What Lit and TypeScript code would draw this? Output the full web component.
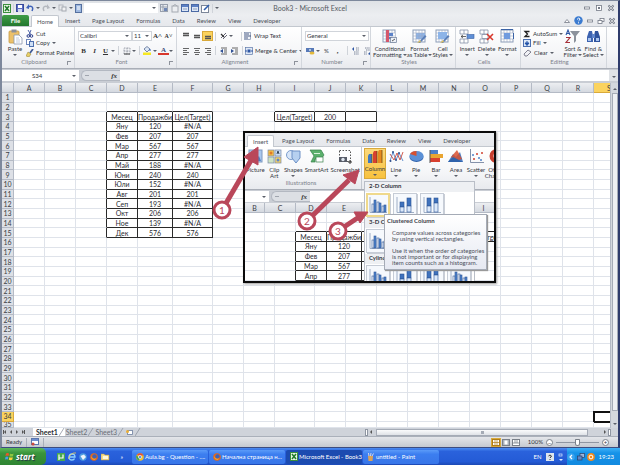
import { LitElement, html, svg, css, nothing, TemplateResult } from "lit";
import { customElement } from "lit/decorators.js";
import { classMap } from "lit/directives/class-map.js";

type Cells = Record<string, string>;

const MONTHS: [string, string, string][] = [
  ["Яну", "120", "#N/A"],
  ["Фев", "207", "207"],
  ["Мар", "567", "567"],
  ["Апр", "277", "277"],
  ["Май", "188", "#N/A"],
  ["Юни", "240", "240"],
  ["Юли", "152", "#N/A"],
  ["Авг", "201", "201"],
  ["Сеп", "193", "#N/A"],
  ["Окт", "206", "206"],
  ["Ное", "139", "#N/A"],
  ["Дек", "576", "576"],
];

const CELLS: Cells = { D3: "Месец", E3: "Продажби", F3: "Цел(Target)", I3: "Цел(Target)", J3: "200", K3: "" };
MONTHS.forEach(([month, sales, target], i) => {
  CELLS[`D${i + 4}`] = month;
  CELLS[`E${i + 4}`] = sales;
  CELLS[`F${i + 4}`] = target;
});

const next = (col: string) => String.fromCharCode(col.charCodeAt(0) + 1);
const boxed = (col: string, row: number) => `${col}${row}` in CELLS;

const svgIcon = (w: number, h: number, body: unknown) =>
  html`<svg class="ico" width=${w} height=${h} viewBox="0 0 ${w} ${h}" aria-hidden="true">${body}</svg>`;

const gridLines = (fill: string) => svg`
  <rect x="1" y="1" width="12" height="12" fill="#fff" stroke="#8c9db8" stroke-width="1"/>
  <rect x="4" y="4" width="9" height="6" fill=${fill}/>
  <path d="M1 4H13M1 7H13M1 10H13M4 1V13M7 1V13M10 1V13" stroke="#9aaac4" stroke-width=".6"/>`;

const ICONS: Record<string, TemplateResult> = {
  excel: svgIcon(8, 9, svg`<rect x=".5" y=".5" width="7" height="8" fill="#e9f5e4" stroke="#3b8f3d"/><path d="M2 2L6 7M6 2L2 7" stroke="#1f7a2a" stroke-width="1.5"/>`),
  save: svgIcon(8, 8, svg`<rect x=".5" y=".5" width="7" height="7" fill="#5b6fc4" stroke="#3a4a9b"/><rect x="2" y="1" width="4" height="3" fill="#fff"/><rect x="2" y="5" width="4" height="3" fill="#cfd6ee"/>`),
  undo: svgIcon(8, 8, svg`<path d="M2 3C5 1 8 3 6 7" fill="none" stroke="#3f62b8" stroke-width="1.5"/><path d="M0 4L3 0V5Z" fill="#3f62b8"/>`),
  redo: svgIcon(8, 8, svg`<path d="M6 3C3 1 0 3 2 7" fill="none" stroke="#b4b8bf" stroke-width="1.5"/><path d="M8 4L5 0V5Z" fill="#b4b8bf"/>`),
  pages: svgIcon(9, 8, svg`<rect x="1" y="1" width="4" height="5" fill="#e8e9eb" stroke="#b4b8bf"/><rect x="4" y="3" width="4" height="4" fill="#f2f2f3" stroke="#a4a9b1"/>`),
  doc: svgIcon(7, 9, svg`<rect x=".5" y=".5" width="6" height="8" fill="#9db8e0" stroke="#55709f"/><path d="M2 3H5M2 5H5" stroke="#fff"/>`),
  sheetGray: svgIcon(9, 8, svg`<rect x=".5" y=".5" width="7" height="7" fill="#e8ebf0" stroke="#98a0ad"/><path d="M1 3H7M3 1V7" stroke="#98a0ad"/><rect x="4" y="4" width="3" height="3" fill="#6f87b5"/>`),
  lock: svgIcon(8, 9, svg`<rect x="1" y="2" width="6" height="6" fill="#eceef1" stroke="#a4a9b1"/><path d="M2 2Q4 -1 6 2" fill="none" stroke="#a4a9b1"/>`),
  form: svgIcon(8, 8, svg`<rect x=".5" y=".5" width="7" height="7" fill="#dce6f5" stroke="#4b6aa5"/><rect x="1" y="1" width="6" height="2" fill="#5c80c4"/><path d="M2 5H6" stroke="#8b9dbd"/>`),
  pen: svgIcon(9, 9, svg`<rect x=".5" y="1.5" width="7" height="7" fill="#fff" stroke="#7b8698"/><path d="M3 6L8 1" stroke="#2f5fae" stroke-width="1.6"/>`),
  paste: svgIcon(15, 16, svg`<rect x="1" y="2" width="10" height="12" rx="1" fill="#ecc069" stroke="#c79a45" stroke-width=".8"/><rect x="3.500" y=".5" width="5" height="3" fill="#8d9099"/><path d="M6 6H11L14 9V15H6Z" fill="#fff" stroke="#8b97ad" stroke-width=".8"/><path d="M8 9H11M8 11H12M8 13H12" stroke="#a9b8d2" stroke-width=".7"/>`),
  cut: svgIcon(8, 8, svg`<path d="M2 0L5 5M5 0L3 5" stroke="#5166a8" stroke-width="1"/><circle cx="2.300" cy="6" r="1.300" fill="none" stroke="#2e3f8c"/><circle cx="5.500" cy="6" r="1.300" fill="none" stroke="#2e3f8c"/>`),
  copy: svgIcon(8, 8, svg`<rect x=".5" y=".5" width="4" height="5" fill="#fff" stroke="#6c86bb"/><rect x="3.500" y="2.500" width="4" height="5" fill="#cfe0f6" stroke="#4c6fae"/>`),
  brush: svgIcon(8, 8, svg`<path d="M0 7L2 3L5 5L3 8Z" fill="#e8d068" stroke="#8f7a2a" stroke-width=".5"/><path d="M4 4L7 0" stroke="#3f5a94" stroke-width="1.700"/>`),
  border: svgIcon(8, 8, svg`<path d="M1 1H7V7H1ZM4 1V7M1 4H7" fill="none" stroke="#8a919c" stroke-width=".8" stroke-dasharray="1 .5"/><path d="M1 7H7" stroke="#444"/>`),
  bucket: svgIcon(9, 9, svg`<path d="M1 3L4 .5L7 3L4 6Z" fill="#dce7f5" stroke="#5a6f96" stroke-width=".8"/><path d="M7 3V5" stroke="#2e5fb0"/><rect y="6.500" width="8" height="2.500" fill="#f6e823"/>`),
  alignTop: svgIcon(8, 8, svg`<path d="M1 1.500H7M1 3.500H7" stroke="#555" stroke-width="1.300"/>`),
  alignMid: svgIcon(8, 8, svg`<path d="M1 3.500H7M1 5.500H7" stroke="#555" stroke-width="1.300"/>`),
  alignBot: svgIcon(8, 8, svg`<path d="M1 4.500H7M1 6.500H7" stroke="#555" stroke-width="1.300"/>`),
  left: svgIcon(8, 8, svg`<path d="M1 1.500H7M1 3.500H5M1 5.500H7M1 7.500H5" stroke="#555" stroke-width=".9"/>`),
  center: svgIcon(8, 8, svg`<path d="M1 1.500H7M2 3.500H6M1 5.500H7M2 7.500H6" stroke="#555" stroke-width=".9"/>`),
  right: svgIcon(8, 8, svg`<path d="M1 1.500H7M3 3.500H7M1 5.500H7M3 7.500H7" stroke="#555" stroke-width=".9"/>`),
  orient: svgIcon(8, 8, svg`<path d="M1 6L6 1M3 7L7 3" stroke="#667" stroke-width="1"/><path d="M1 2L4 5" stroke="#333" stroke-width="1.200"/>`),
  indentL: svgIcon(8, 8, svg`<path d="M1 1H7M4 3H7M4 5H7M1 7H7" stroke="#555" stroke-width=".9"/><path d="M0 4L3 2V6Z" fill="#2e4f94"/>`),
  indentR: svgIcon(8, 8, svg`<path d="M1 1H7M4 3H7M4 5H7M1 7H7" stroke="#555" stroke-width=".9"/><path d="M3 4L0 2V6Z" fill="#2e4f94"/>`),
  wrap: svgIcon(8, 8, svg`<rect x=".5" y=".5" width="6" height="7" fill="#eef2f8" stroke="#7c8cab" stroke-width=".7"/><path d="M1 2H5M1 4H7M1 6H4" stroke="#3b4d78" stroke-width=".9"/>`),
  merge: svgIcon(8, 8, svg`<rect x=".5" y=".5" width="7" height="7" fill="#dfe8f6" stroke="#5d78a8" stroke-width=".7"/><rect x="2.500" y="2.500" width="3" height="3" fill="#2f57a4"/><path d="M0 4H2M6 4H8" stroke="#2f57a4"/>`),
  money: svgIcon(9, 8, svg`<rect y="1" width="8" height="4" fill="#5779b8"/><circle cx="4" cy="3" r="1" fill="#cfe0ee"/><ellipse cx="6" cy="6" rx="2.500" ry="1.500" fill="#e3b93c"/>`),
  decUp: svgIcon(8, 8, svg`<path d="M4 1H7M4 3H7M2 5H7M2 7H7" stroke="#7a8499" stroke-width="1" stroke-dasharray="1.500 .7"/><path d="M0 2L2 0V4Z" fill="#2f57a4"/>`),
  decDown: svgIcon(8, 8, svg`<path d="M2 1H7M3 3H7M1 5H4M1 7H4" stroke="#7a8499" stroke-width="1" stroke-dasharray="1.500 .7"/><path d="M5 7L7 5V8Z" fill="#2f57a4"/>`),
  cond: svgIcon(15, 15, svg`${gridLines("#fff")}<rect x="4" y="1" width="3" height="12" fill="#d4576b"/><rect x="7" y="4" width="4" height="3" fill="#5c83c8"/><rect x="7" y="8" width="3" height="2" fill="#5c83c8"/><rect x="8.500" y="8.500" width="6" height="5" fill="#eef2f8" stroke="#6d7c98" stroke-width=".7"/><path d="M10 12L13 10" stroke="#333" stroke-width=".8"/>`),
  fmtTable: svgIcon(15, 15, svg`${gridLines("#8db4e8")}<path d="M6 14L13 6L14.500 7.500L8 14Z" fill="#5b7fb8"/><path d="M5 14L8 11L9 13Z" fill="#e2c25b"/>`),
  cellStyle: svgIcon(15, 15, svg`${gridLines("#fff")}<rect x="3" y="3" width="9" height="7" fill="#8db4e8"/><path d="M6 14L13 6L14.500 7.500L8 14Z" fill="#5b7fb8"/><path d="M5 14L8 11L9 13Z" fill="#e2c25b"/>`),
  insertCells: svgIcon(16, 15, svg`<path d="M1 1H9V5H1ZM5 1V5M1 10H9V14H1ZM5 10V14" fill="#fff" stroke="#8592aa" stroke-width=".8"/><rect x="8" y="5.500" width="7" height="4" fill="#5f8fd6" stroke="#3a62a5" stroke-width=".6"/><path d="M2 7.500H7M2 7.500L4 6M2 7.500L4 9" stroke="#444" stroke-width=".8" fill="none"/>`),
  deleteCells: svgIcon(16, 15, svg`<path d="M1 1H9V5H1ZM5 1V5M1 10H9V14H1ZM5 10V14M3 5.500H9V9.500H3Z" fill="#fff" stroke="#8592aa" stroke-width=".8"/><path d="M8 5L14 11M14 5L8 11" stroke="#d8372c" stroke-width="1.600"/>`),
  formatCells: svgIcon(15, 15, svg`${gridLines("#fff")}<rect x="4" y="4" width="6" height="6" fill="#6f9ade"/><path d="M1 .5H13M13.500 4V10" stroke="#3a62a5" stroke-width="1"/>`),
  sigma: svgIcon(8, 8, svg`<path d="M6.500 1.500H2L4.500 4L2 6.500H6.500" fill="none" stroke="#222" stroke-width="1.300"/>`),
  fill: svgIcon(8, 8, svg`<rect x=".5" y=".5" width="7" height="7" fill="#dce8f8" stroke="#4b6fb0"/><path d="M4 2V4M2 4H6L4 6.500Z" stroke="#2253a8" fill="#2253a8"/>`),
  eraser: svgIcon(9, 8, svg`<path d="M1 5L5 1L8 3L4 7H2Z" fill="#f0f1f5" stroke="#667" stroke-width=".8"/>`),
  sort: svgIcon(15, 15, svg`<path d="M1 6L3 1L5 6M1.500 4.500H4.500" fill="none" stroke="#2f57a4" stroke-width="1.100"/><path d="M1 8.500H5L1 13.500H5" fill="none" stroke="#a6323a" stroke-width="1.200"/><path d="M5 2H15L11 7V12L9 14V7Z" fill="#8c929c"/>`),
  binocular: svgIcon(15, 15, svg`<path d="M3 2H6L7 7V13H1V8Z" fill="#3d63b0"/><path d="M9 2H12L14 8V13H8V7Z" fill="#2f539d"/><rect x="6" y="5" width="3" height="4" fill="#5f86cc"/><rect x="2" y="9" width="3" height="3" fill="#a9c4ee"/><rect x="10" y="9" width="3" height="3" fill="#a9c4ee"/>`),
  picture: svgIcon(15, 15, svg`<rect x="1" y="1" width="13" height="12" fill="#a9c8ee" stroke="#7d98c0"/><path d="M2 12L6 6L9 9L11 7L13 12Z" fill="#4f7fc4"/>`),
  clip: svgIcon(15, 15, svg`<g stroke="#7a8aa6" stroke-width=".7"><rect x="1" y="1" width="6" height="6" fill="#f4c04a"/><rect x="8" y="1" width="6" height="6" fill="#c9dcf5"/><rect x="1" y="8" width="6" height="6" fill="#cfe3c2"/><rect x="8" y="8" width="6" height="6" fill="#f2d06a"/></g><circle cx="4" cy="4" r="1.500" fill="#e07a2a"/><circle cx="11" cy="11" r="1.500" fill="#5b86c9"/><path d="M10 5L11 2L12 5" stroke="#345" fill="none"/>`),
  shapes: svgIcon(15, 15, svg`<circle cx="5" cy="6" r="4.500" fill="#d8e6f8" stroke="#7b9ccc"/><path d="M6 2H14V9L10 14L6 9Z" fill="#b6d0f0" stroke="#6c90c6"/>`),
  smart: svgIcon(16, 15, svg`<path d="M1 1H12L15 6L12 10H6V13H2L5 7Z" fill="#5bb06c" stroke="#37804a" stroke-width=".7"/><rect x="5" y="4" width="6" height="1" fill="#d9f0dc"/><rect x="7" y="8" width="7" height="5" fill="#fff" stroke="#37804a" stroke-width=".7"/>`),
  shot: svgIcon(15, 15, svg`<rect x="1.500" y="1.500" width="11" height="11" fill="none" stroke="#555" stroke-dasharray="1.500 1.500"/><rect x="1" y="8" width="8" height="5" fill="#555a66"/><circle cx="5" cy="10.500" r="1.700" fill="#dfe6ef"/><path d="M12 11V15M10 13H14" stroke="#333"/>`),
  chColumn: svgIcon(16, 15, svg`<path d="M1 7L2 5H5V14H1Z" fill="#3f78c0"/><path d="M6 4L7 2H10V14H6Z" fill="#d8402f"/><path d="M11 3L12 1H15V14H11Z" fill="#e58a1e"/><path d="M5 5V14M10 2V14M15 1V14" stroke="#5b3a10" stroke-width=".7"/>`),
  chLine: svgIcon(15, 15, svg`<path d="M1 12L4 3L7 11L10 4L14 12" fill="none" stroke="#4f82c8" stroke-width=".9"/><path d="M1 5L5 11L8 4L11 11L14 3" fill="none" stroke="#cc4a3c" stroke-width=".9"/><g fill="#2d4f8c"><circle cx="4" cy="3" r="1"/><circle cx="7" cy="11" r="1"/><circle cx="10" cy="4" r="1"/><circle cx="1.500" cy="12" r="1"/></g>`),
  chPie: svgIcon(15, 15, svg`<ellipse cx="7.500" cy="8" rx="7" ry="5" fill="#2f62ab"/><ellipse cx="7.500" cy="7" rx="7" ry="5" fill="#5b90d6"/><path d="M7.500 7V2A7 5 0 0 0 1 5Z" fill="#d8502f"/>`),
  chBar: svgIcon(15, 15, svg`<rect x="1" y="1" width="8" height="4" fill="#4d7fc6"/><rect x="1" y="5" width="13" height="4" fill="#e9a531"/><rect x="1" y="9" width="10" height="4" fill="#d8402f"/><path d="M1 1V14" stroke="#555"/>`),
  chArea: svgIcon(16, 15, svg`<path d="M0 13L5 5L8 8L12 3L15 13Z" fill="#4d7fc6"/><path d="M3 8L9 1L14 10L8 12Z" fill="#d8502f" opacity=".85"/><path d="M0 13L5 8L15 13Z" fill="#2f62ab"/>`),
  chScatter: svgIcon(15, 15, svg`<path d="M1.500 0V13.500H15" fill="none" stroke="#8592aa"/><g fill="#d0402f"><circle cx="5" cy="10" r="1"/><circle cx="8" cy="5" r="1"/><circle cx="13" cy="4" r="1"/></g><g fill="#4f82c8"><circle cx="4" cy="6" r="1"/><circle cx="10" cy="9" r="1"/><circle cx="12" cy="11" r="1"/></g>`),
  chOther: svgIcon(15, 15, svg`<circle cx="7.500" cy="7" r="5" fill="none" stroke="#c9402f" stroke-width="4"/>`),
  tile: svgIcon(20, 20, svg`<path d="M2 2V17.500H19" fill="none" stroke="#8b9db8" stroke-width=".8"/><g stroke="#2c5596" stroke-width=".6"><rect x="4" y="9" width="2" height="8" fill="#fff"/><rect x="6" y="5" width="2" height="12" fill="#4f83cc"/><rect x="9" y="7" width="2" height="10" fill="#fff"/><rect x="11" y="8" width="2" height="9" fill="#4f83cc"/><rect x="14" y="11" width="2" height="6" fill="#fff"/><rect x="16" y="10" width="2" height="7" fill="#4f83cc"/></g>`),
  tileStack: svgIcon(20, 20, svg`<path d="M2 2V17.500H19" fill="none" stroke="#8b9db8" stroke-width=".8"/><g stroke="#2c5596" stroke-width=".6"><rect x="5" y="7" width="4" height="5" fill="#3f72bd"/><rect x="5" y="12" width="4" height="5" fill="#dce9f9"/><rect x="12" y="3" width="4" height="8" fill="#3f72bd"/><rect x="12" y="11" width="4" height="6" fill="#dce9f9"/></g>`),
  tileFull: svgIcon(20, 20, svg`<path d="M2 2V17.500H19" fill="none" stroke="#8b9db8" stroke-width=".8"/><g stroke="#2c5596" stroke-width=".6"><rect x="5" y="3" width="4" height="8" fill="#3f72bd"/><rect x="5" y="11" width="4" height="6" fill="#dce9f9"/><rect x="12" y="3" width="4" height="5" fill="#3f72bd"/><rect x="12" y="8" width="4" height="9" fill="#dce9f9"/></g>`),
  min: svgIcon(8, 8, svg`<rect x="1.500" y="3" width="5" height="2" fill="#fff" stroke="#737985" stroke-width=".8"/>`),
  max: svgIcon(8, 8, svg`<rect x="1.500" y="1.500" width="5" height="5" fill="#fff" stroke="#737985" stroke-width=".8"/><rect x="3" y="3" width="2" height="2" fill="#737985"/>`),
  restore: svgIcon(8, 8, svg`<rect x="3" y="1.500" width="4" height="3" fill="#fff" stroke="#737985" stroke-width=".8"/><rect x="1" y="3.500" width="4" height="3" fill="#fff" stroke="#737985" stroke-width=".8"/>`),
  close: svgIcon(8, 8, svg`<path d="M1.500 1.500L6.500 6.500M6.500 1.500L1.500 6.500" stroke="#737985" stroke-width="1.800"/><path d="M2 2L6 6M6 2L2 6" stroke="#fff" stroke-width=".6"/>`),
  up: svgIcon(8, 8, svg`<path d="M1.500 5.500L4 2.500L6.500 5.500Z" fill="#fff" stroke="#737985" stroke-width=".8"/>`),
  help: svgIcon(9, 9, svg`<circle cx="4.500" cy="4.500" r="4.200" fill="#3b7bd0"/><path d="M3 3.500Q4.500 1 6 3Q6 4 4.500 5M4.500 6.300V7.300" fill="none" stroke="#fff" stroke-width="1"/>`),
  flag: svgIcon(9, 9, svg`<path d="M1 1.500Q2.500 .5 4 1.500L3.500 4Q2 3.200 .5 4Z" fill="#f0552a"/><path d="M5 1.500Q6.500 2.500 8.500 1.500L8 4.200Q6 5 4.500 4.200Z" fill="#8cc63f"/><path d="M.5 5Q2 4.200 3.300 5L2.800 7.500Q1.500 6.800 0 7.500Z" fill="#4a9bea"/><path d="M4.300 5.200Q6 6 7.800 5.200L7.300 7.800Q5.500 8.500 3.800 7.800Z" fill="#fbd13b"/>`),
  utorrent: svgIcon(8, 8, svg`<rect width="8" height="8" fill="#49a84f"/><path d="M2 1.500V5H6V1.500M2 5V7" fill="none" stroke="#fff" stroke-width="1.200"/>`),
  ie: svgIcon(8, 9, svg`<path d="M1 5H7Q7 2 4 2Q1 2 1 5Q1 8 4 8Q6 8 6.500 6.500" fill="none" stroke="#8fd2ff" stroke-width="1.300"/><path d="M0 7Q3 0 8 1" fill="none" stroke="#f4cf52" stroke-width=".8"/>`),
  thunder: svgIcon(8, 8, svg`<circle cx="4" cy="4" r="3.700" fill="#4f9ce0"/><path d="M1.500 3L5 1.500L7 4L4 7Z" fill="#eef5fb"/>`),
  fox: svgIcon(8, 8, svg`<circle cx="4" cy="4" r="3.800" fill="#e2681d"/><circle cx="4.500" cy="3.500" r="2.200" fill="#3c62b8"/><path d="M1 3Q3 7 6 5L5 7Q1 7 1 3Z" fill="#f4a02a"/>`),
  folder: svgIcon(9, 8, svg`<path d="M0 1H3L4 2H8V7H0Z" fill="#f3dc8a" stroke="#c49a3a" stroke-width=".5"/><rect x="2" y="3" width="5" height="3" fill="#fff8dc"/>`),
  chrome: svgIcon(8, 8, svg`<circle cx="4" cy="4" r="3.800" fill="#f2c230"/><path d="M.7 2.200A3.800 3.800 0 0 1 7.500 2.500H4Z" fill="#dd4b3e"/><path d="M.6 2.300L3.500 5.500L3 7.600A3.800 3.800 0 0 1 .6 2.300Z" fill="#3ea355"/><circle cx="4" cy="4" r="1.600" fill="#4a8cf0" stroke="#fff" stroke-width=".6"/>`),
  paint: svgIcon(8, 8, svg`<path d="M1 3H6L5.500 8H1.500Z" fill="#d9a25a"/><path d="M2 3L1.500 0M3.500 3L4 0M5 3L6.500 .5" stroke="#d6d9e8" stroke-width="1"/>`),
  trayHelp: svgIcon(8, 8, svg`<rect width="8" height="8" fill="#dfe6ee"/><path d="M2.500 3Q4 1 5.500 3L4 5M4 6V7" fill="none" stroke="#333" stroke-width="1"/>`),
  trayDots: svgIcon(6, 8, svg`<rect x="1" y="1" width="3" height="2" fill="none" stroke="#dcebff" stroke-width=".7"/><path d="M1 6H5L3 8Z" fill="#dcebff"/>`),
  trayBack: svgIcon(8, 8, svg`<circle cx="4" cy="4" r="3.800" fill="#3aa2ee"/><path d="M5 2L3 4L5 6" fill="none" stroke="#fff" stroke-width="1.200"/>`),
  trayNet: svgIcon(8, 8, svg`<rect x="3" y=".5" width="4.500" height="4" fill="#9fb7dd" stroke="#2d3f66" stroke-width=".7"/><rect x=".5" y="3" width="4.500" height="4" fill="#5e86c8" stroke="#2d3f66" stroke-width=".7"/>`),
  trayAv: svgIcon(8, 8, svg`<circle cx="4" cy="4" r="3.900" fill="#f08a1c"/><circle cx="4" cy="4" r="1.900" fill="none" stroke="#fff" stroke-width="1"/>`),
  record: svgIcon(8, 8, svg`<rect x=".5" y=".5" width="7" height="6" fill="#fff" stroke="#5b77ad"/><rect x="1" y="1" width="6" height="2" fill="#6f8fd0"/><circle cx="2" cy="6" r="1.600" fill="#cc4a3c"/>`),
  viewNormal: svgIcon(8, 7, svg`<rect x=".5" y=".5" width="7" height="6" fill="#fff" stroke="#b07d18"/><path d="M3 1V6M5 1V6M1 3.500H7" stroke="#b07d18" stroke-width=".7"/>`),
  viewLayout: svgIcon(8, 7, svg`<rect x=".5" y=".5" width="7" height="6" fill="#aab0ba" stroke="#7a8089"/><rect x="2.500" y="1.500" width="3" height="4" fill="#fff"/>`),
  viewBreak: svgIcon(8, 7, svg`<rect x=".5" y=".5" width="7" height="6" fill="#fff" stroke="#7a8089"/><path d="M3 1V4M5 1V4M1 4H7" stroke="#7a8089" stroke-width=".8"/>`),
  slant: svgIcon(6, 8, svg`<path d="M0 8L5 0" stroke="#8f96a2" stroke-width=".8"/>`),
  newSheet: svgIcon(9, 7, svg`<rect x="2.500" y="1.500" width="5" height="4" fill="#fff" stroke="#6d7f9f" stroke-width=".8"/><circle cx="2.500" cy="2.500" r="1.500" fill="#eaae35"/>`),
};

const caret = html`<i class="caret"></i>`;
const sep = html`<i class="sep"></i>`;

const tool = (name: string, label: string, cls = "") =>
  html`<button class="tool ${cls}" aria-label=${label}>${ICONS[name]}</button>`;
const drop = (label: string) => html`<button class="drop" aria-label="${label} options">${caret}</button>`;
const small = (name: string, label: string, arrow = false) =>
  html`<button class="small">${ICONS[name]}<span>${label}</span>${arrow ? caret : nothing}</button>`;
const big = (name: string, lines: string[], cls = "", arrow = true) => html`
  <button class="big ${cls}">
    <span class="pic">${ICONS[name]}</span>
    ${lines.map(
      (line, i) => html`<span class="line">${line}${arrow && lines.length > 1 && i === lines.length - 1 ? caret : nothing}</span>`,
    )}
    ${arrow && lines.length === 1 ? html`<span class="line">${caret}</span>` : nothing}
  </button>`;
const group = (label: string, cls: string, body: TemplateResult, launcher = false) => html`
  <section class="group ${cls}">
    <div class="body">${body}</div>
    <footer>${label}${launcher ? html`<button class="launch" aria-label="${label} settings"></button>` : nothing}</footer>
  </section>`;

const tabs = (names: string[], active: string) =>
  names.map((n) => html`<button class=${classMap({ tab: true, active: n === active })} role="tab">${n}</button>`);

const sheet = (cols: string[], rows: number, numbered: boolean, cls: string, selected = "") => html`
  <table class="cells ${cls}">
    <thead>
      <tr>
        ${numbered ? html`<th class="corner"></th>` : nothing}
        ${cols.map((c) => html`<th class=${classMap({ sel: selected.startsWith(c) })} scope="col">${c}</th>`)}
      </tr>
    </thead>
    <tbody>
      ${Array.from({ length: rows }, (_, i) => i + 1).map(
        (r) => html`<tr>
          ${numbered ? html`<th class=${classMap({ rowhead: true, sel: selected.slice(1) === String(r) })} scope="row">${r}</th>` : nothing}
          ${cols.map(
            (c) => html`<td
              class=${classMap({
                dr: boxed(c, r) || boxed(next(c), r),
                db: boxed(c, r) || boxed(c, r + 1),
                cur: selected === c + r,
              })}
            >${CELLS[c + r] ?? ""}</td>`,
          )}
        </tr>`,
      )}
    </tbody>
  </table>`;

@customElement("app-root")
export class AppRoot extends LitElement {
  static styles = css`
    :host {
      display: flex;
      flex-direction: column;
      height: 100vh;
      overflow: hidden;
      font: 6px/6px Lato, "Open Sans", sans-serif;
      color: #33363d;
      background: #2a5fd8;
    }
    * { box-sizing: border-box; }
    button, input, select {
      font: inherit;
      color: inherit;
      border: 0;
      margin: 0;
      padding: 0;
      background: none;
      border-radius: 0;
      appearance: none;
      outline: 0;
      white-space: nowrap;
    }
    .ico { display: block; flex: none; }
    .caret {
      display: inline-block;
      flex: none;
      width: 0;
      border: 2px solid transparent;
      border-top-color: #5a5f69;
      border-bottom: 0;
    }
    .sep { flex: none; width: 1px; height: 9px; margin: 0 2px; background: #cfd3d9; }
    .grow { flex: 1; }

    .window {
      flex: 1;
      min-height: 0;
      display: flex;
      flex-direction: column;
      border: solid #7d889c;
      border-width: 1px 2px;
      border-right-color: #2f3c6c;
      border-bottom-color: #3c4c80;
      background: #e3e6ea;
    }
    .title {
      flex: none;
      height: 14px;
      display: grid;
      grid-template-columns: 1fr auto 1fr;
      align-items: center;
      background: linear-gradient(#dfe2e6, #eceef1);
    }
    .qat { display: flex; align-items: center; gap: 2px; padding-left: 1px; }
    .qat button { display: flex; align-items: center; gap: 2px; }
    .qat .sep { margin: 0; }
    .search { display: flex; align-items: center; width: 74px; height: 10px; padding-right: 2px; background: #fff; }
    .search input { flex: 1; min-width: 0; height: 8px; }
    .title h1 { margin: 0; font-size: 7px; line-height: 10px; font-weight: 400; color: #555962; }
    .controls { display: flex; justify-content: flex-end; align-items: center; gap: 4px; padding-right: 3px; }
    .tabs {
      flex: none;
      height: 12px;
      display: flex;
      align-items: stretch;
      background: linear-gradient(#eceef1, #e6e8ec);
      border-bottom: 1px solid #c3c8cf;
    }
    .tab { padding: 0 6px; color: #4b4f58; }
    .tab.active {
      background: #fff;
      border: 1px solid #c3c8cf;
      border-bottom: 0;
      margin: 0 0 -1px;
      padding: 0 5px;
      border-radius: 2px 2px 0 0;
    }
    .tab.file { width: 27px; margin-right: 2px; color: #fff; font-weight: 700; background: linear-gradient(#3f9c47, #23772e); border-radius: 2px 2px 0 0; }
    .tabs .controls { flex: 1; gap: 3px; padding-right: 2px; }

    .ribbon {
      flex: none;
      height: 42px;
      display: flex;
      overflow: hidden;
      background: linear-gradient(#fff, #f5f6f8 60%, #e8eaee);
      border-bottom: 1px solid #a9aeb7;
    }
    .group { flex: none; display: flex; flex-direction: column; border-right: 1px solid #d3d7dd; overflow: hidden; }
    .group .body { flex: 1; min-height: 0; display: flex; padding: 2px 2px 0; }
    .group footer { position: relative; height: 10px; line-height: 8px; text-align: center; color: #7d828c; padding-right: 8px; }
    .launch { position: absolute; right: 3px; top: 3px; width: 4px; height: 4px; border: solid #8d929b; border-width: 1px 0 0 1px; }
    .clip { width: 73px; }
    .font { width: 102px; }
    .align { width: 125px; }
    .number { width: 69px; }
    .styles { width: 85px; }
    .cellsgrp { width: 65px; }
    .edit { width: 86px; }
    .big { display: flex; flex-direction: column; align-items: center; flex: 1 1 auto; }
    .pic { height: 18px; }
    .line { display: flex; align-items: center; justify-content: center; gap: 1px; height: 6px; }
    .stack { display: flex; flex-direction: column; justify-content: space-around; flex: none; }
    .small { display: flex; align-items: center; gap: 2px; height: 8px; }
    .paste { flex: none; width: 22px; }
    .rows { flex: 1; display: flex; flex-direction: column; justify-content: space-around; padding: 0 1px; }
    .row { display: flex; align-items: center; height: 10px; }
    .tool { width: 11px; height: 10px; display: flex; align-items: center; justify-content: center; flex: none; }
    .drop { width: 5px; height: 10px; display: flex; align-items: center; flex: none; }
    .on { background: #fbd35e; border: 1px solid #d9a93a; }
    .text { font: 700 7px/8px "Liberation Serif", serif; color: #333; }
    .ital { font-style: italic; }
    .under { text-decoration: underline; }
    .red { border-bottom: 2px solid #d8372c; line-height: 6px; height: 9px; color: #3b4a78; }
    .sm { font-size: 6px; }
    .combo { display: flex; align-items: center; height: 10px; border: 1px solid #d0d4da; background: #fff; padding-right: 2px; }
    .combo select { flex: 1; min-width: 0; height: 8px; padding-left: 1px; }
    .wide { width: 54px; }
    .narrow { width: 20px; }
    .full { width: 64px; }
    .pad { width: 2px; flex: none; }
    .pad4 { width: 5px; flex: none; }

    .formula {
      flex: none;
      height: 14px;
      display: flex;
      align-items: stretch;
      padding: 1px 0 2px;
      background: #c9cdd4;
    }
    .name { display: flex; align-items: center; width: 77px; background: #fff; padding-right: 3px; }
    .name input { flex: 1; min-width: 0; text-align: center; }
    .fx {
      display: flex;
      align-items: center;
      justify-content: space-between;
      width: 39px;
      margin-left: 2px;
      padding: 0 3px;
      border-radius: 6px 0 0 6px;
      background: #dcdfe4;
      border: 1px solid #b3b8c1;
      border-right: 0;
    }
    .fx em { font: italic 700 7px/8px "Liberation Serif", serif; color: #333; }
    .fx i { width: 4px; border-top: 1px solid #a0a5ae; }
    .formula .entry { flex: 1; min-width: 0; background: #fff; }
    .expand { width: 9px; background: #dfe2e6; }

    .work { position: relative; flex: 1; min-height: 0; display: flex; }
    .cells {
      flex: 1;
      min-width: 0;
      display: grid;
      background: #fff;
      overflow: hidden;
      font: 7px/8px Lato, "Open Sans", sans-serif;
      color: #2b2d33;
    }
    .cells thead, .cells tbody, .cells tr { display: contents; }
    .main {
      grid-template-columns: 12px repeat(4, 31px) 35px 40px repeat(2, 31px) 40px repeat(10, 31px);
      grid-template-rows: 10px repeat(34, minmax(0, 3fr)) minmax(0, 2fr);
    }
    .cells th, .cells td {
      padding: 0;
      min-width: 0;
      min-height: 0;
      overflow: hidden;
      display: flex;
      align-items: center;
      justify-content: center;
      white-space: nowrap;
      font-weight: 400;
      border: solid #dfe3ea;
      border-width: 0 1px 1px 0;
    }
    .cells th { background: #dde0e6; border-color: #b4bac5; color: #3a3d44; }
    .cells thead th { background: linear-gradient(#eceef1, #d5d9e0); }
    .cells thead th.sel, .cells th.sel { background: #fbd35e; border-color: #d9a93a; }
    .cells td.dr { border-right-color: #2a2a2a; }
    .cells td.db { border-bottom-color: #2a2a2a; }
    .cells td.cur { border: 2px solid #111; border-right: 0; margin: -1px 0 -1px -1px; }
    .vscroll {
      width: 8px;
      display: flex;
      flex-direction: column;
      align-items: center;
      justify-content: space-between;
      background: #d4d8de;
      border-left: 1px solid #b4bac5;
      padding: 5px 0 3px;
    }
    .vscroll .up { border-top: 0; border-bottom: 2px solid #5a5f69; }
    .vthumb { width: 6px; flex: 1; margin: 3px 0 12px; background: #eef0f3; border: 1px solid #a5abb6; }

    .shot {
      position: absolute;
      left: 241px;
      top: 48px;
      width: 253px;
      height: 152px;
      margin: 0;
      display: flex;
      flex-direction: column;
      overflow: hidden;
      border: 2px solid #0b0b0b;
      box-shadow: 1px 1px 2px #999;
      background: #e6e8ec;
    }
    .shot .tabs { height: 14px; padding: 2px 0 0 2px; }
    .shot .tabs .active { margin-right: 2px; }
    .shot .ribbon { height: 43px; }
    .shot .group { border-color: #c3c8cf; }
    .shot .formula { height: 13px; padding: 1px 0; }
    .illus { width: 117px; }
    .shot .illus footer { padding-right: 4px; }
    .charts { flex: 1; display: flex; padding: 1px 2px; }
    .charts .big { flex: none; width: 20px; padding-top: 1px; height: 31px; }
    .charts .big.on { width: 22px; background: linear-gradient(#fbd97c, #f8c23e); padding: 0; }
    .shot .name { width: 24px; }
    .mini {
      flex: 1;
      width: 100%;
      grid-template-columns: 20px 31px 31px 35px 40px 31px 31px 40px;
      grid-template-rows: 10px repeat(7, minmax(0, 1fr));
    }
    .shot .group .body { padding: 2px 0 0; }
    .menu {
      position: absolute;
      left: 119px;
      top: 48px;
      width: 111px;
      background: #fff;
      border: 1px solid #b9bec7;
    }
    .menu h2 { margin: 0; padding: 0 4px; height: 10px; font-size: 6px; line-height: 8px; background: #eef0f3; }
    .tiles { display: flex; gap: 3px; padding: 0 1px; height: 26px; align-items: center; }
    .tiles button { width: 24px; height: 24px; padding: 1px; border: 1px solid #c6ccd6; background: #f6f9fd; box-shadow: 1px 1px 0 #c9ced7; }
    .tiles .hot { border: 2px solid #efd98c; padding: 0; }
    .tip {
      position: absolute;
      left: 139px;
      top: 81px;
      width: 103px;
      height: 56px;
      background: linear-gradient(#fff, #e6e9f2);
      border: 1px solid #a5abb6;
      box-shadow: 1px 1px 1px #999;
      padding: 3px 2px 0;
      color: #4b4f5a;
    }
    .tip b { display: block; color: #3f434c; }
    .tip p { margin: 6px 0 0; padding-left: 5px; white-space: nowrap; }
    .notes { position: absolute; left: 0; top: 0; width: 100%; height: 100%; pointer-events: none; }
    .notes g { stroke: #b9475a; fill: #b9475a; }
    .notes text { stroke: none; font: 10px Lato, sans-serif; text-anchor: middle; }

    .bottom { flex: none; height: 8px; display: flex; align-items: center; background: #cfd3da; font-size: 7px; line-height: 8px; }
    .nav { display: flex; align-items: center; gap: 4px; width: 31px; padding: 0 2px; }
    .tri { width: 0; border: 2px solid transparent; }
    .tri.l { border-right-color: #555; border-left: 0; }
    .tri.r { border-left-color: #555; border-right: 0; }
    .tri.end { box-shadow: 1px 0 0 #555; }
    .tri.home { box-shadow: -1px 0 0 #555; }
    .stab { height: 8px; padding: 0 0 0 1px; display: flex; align-items: center; gap: 1px; color: #6a6e77; }
    .stab.active { background: #fff; color: #2b2d33; font-weight: 700; padding-left: 3px; }
    .hscroll { width: 240px; display: flex; align-items: center; gap: 4px; height: 8px; padding: 0 2px; }
    .hthumb { flex: 1; height: 7px; margin-right: 12px; background: linear-gradient(#fafbfc, #dfe2e7); border: 1px solid #a5abb6; display: flex; justify-content: center; align-items: center; }
    .hthumb i { width: 3px; height: 3px; background: #a5abb6; }
    .split { width: 3px; height: 7px; border: 1px solid #8f96a2; background: #fff; }
    .split.last { margin-right: 7px; }
    .status { flex: none; height: 11px; display: flex; align-items: center; gap: 3px; padding: 0 4px; background: linear-gradient(#e4e6ea, #c5c9d0); border-top: 1px solid #aab0ba; }
    .status .sep { margin: 0 1px; background: #a9afb9; }
    .views { display: flex; margin-right: 4px; }
    .views .tool { width: 10px; height: 9px; }
    .round { width: 7px; height: 7px; border: 1px solid #7a8089; border-radius: 50%; background: #fff; line-height: 5px; text-align: center; }
    .zoom { width: 43px; height: 8px; background: linear-gradient(#8f96a2, #8f96a2) center / 100% 1px no-repeat; }
    .zoom::-webkit-slider-thumb { appearance: none; width: 5px; height: 7px; background: #fff; border: 1px solid #7a8089; border-radius: 1px 1px 3px 3px; }

    .taskbar {
      flex: none;
      height: 17px;
      display: flex;
      align-items: center;
      color: #fff;
      background: linear-gradient(#4c8cf2, #2a62dc 20%, #245bd6 80%, #1c49b4);
    }
    .start {
      align-self: stretch;
      width: 46px;
      display: flex;
      align-items: center;
      justify-content: flex-start;
      gap: 2px;
      padding-left: 5px;
      color: #fff;
      font: italic 700 8px/12px "Open Sans", sans-serif;
      text-shadow: 1px 1px 1px #234;
      background: linear-gradient(#5cb85a, #3a943c 30%, #2f8532);
      border-radius: 0 5px 5px 0;
    }
    .quick { display: flex; align-items: center; gap: 3px; width: 86px; padding: 0 9px 0 11px; }
    .task {
      flex: none;
      width: 76px;
      height: 14px;
      margin-right: 1px;
      display: flex;
      align-items: center;
      gap: 1px;
      padding-left: 4px;
      color: #fff;
      background: linear-gradient(#5b9bf8, #3c7ef0 30%, #3876e8);
      border-radius: 2px;
    }
    .task.active { background: #1c4bb0; }
    .tray { display: flex; align-items: center; gap: 2px; align-self: stretch; padding: 0 6px 0 0; background: linear-gradient(#3fb0f6, #1592e8 30%, #128ae0); }
    .tray time { padding-left: 2px; }
    .lang { display: flex; align-items: center; gap: 4px; padding-right: 3px; }
  `;

  private ribbon() {
    return html`<div class="ribbon">
      ${group("Clipboard", "clip", html`
        ${big("paste", ["Paste"], "paste")}
        <div class="stack">${small("cut", "Cut")}${small("copy", "Copy", true)}${small("brush", "Format Painter")}</div>`, true)}
      ${group("Font", "font", html`<div class="rows">
        <div class="row">
          <label class="combo wide"><select aria-label="Font"><option>Calibri</option></select>${caret}</label>
          <label class="combo narrow"><select aria-label="Font size"><option>11</option></select>${caret}</label>
          <button class="tool text">A˄</button><button class="tool text sm">A˅</button>
        </div>
        <div class="row">
          <button class="tool text">B</button><button class="tool text ital">I</button><button class="tool text under">U</button>
          ${drop("Underline")}${sep}${tool("border", "Borders")}${drop("Borders")}${sep}
          ${tool("bucket", "Fill color")}${drop("Fill color")}<button class="tool text red">A</button>${drop("Font color")}
        </div></div>`, true)}
      ${group("Alignment", "align", html`<div class="rows">
        <div class="row">
          ${tool("alignTop", "Top")}${tool("alignMid", "Middle")}${tool("alignBot", "Bottom", "on")}${sep}
          ${tool("orient", "Orientation")}${drop("Orientation")}<i class="pad4"></i>${sep}${small("wrap", "Wrap Text")}
        </div>
        <div class="row">
          ${tool("left", "Left")}${tool("center", "Center")}${tool("right", "Right")}${sep}
          ${tool("indentL", "Decrease indent")}${tool("indentR", "Increase indent")}${sep}${small("merge", "Merge & Center", true)}
        </div></div>`, true)}
      ${group("Number", "number", html`<div class="rows">
        <div class="row"><label class="combo full"><select aria-label="Number format"><option>General</option></select>${caret}</label></div>
        <div class="row">
          ${tool("money", "Accounting")}${drop("Accounting")}<button class="tool">%</button><button class="tool text">,</button>
          <i class="pad"></i>${sep}${tool("decUp", "Increase decimal")}${tool("decDown", "Decrease decimal")}
        </div></div>`, true)}
      ${group("Styles", "styles", html`
        ${big("cond", ["Conditional", "Formatting"])}${big("fmtTable", ["Format", "as Table"])}${big("cellStyle", ["Cell", "Styles"])}`)}
      ${group("Cells", "cellsgrp", html`
        ${big("insertCells", ["Insert"])}${big("deleteCells", ["Delete"])}${big("formatCells", ["Format"])}`)}
      ${group("Editing", "edit", html`
        <div class="stack">${small("sigma", "AutoSum", true)}${small("fill", "Fill", true)}${small("eraser", "Clear", true)}</div>
        ${big("sort", ["Sort &", "Filter"])}${big("binocular", ["Find &", "Select"])}`)}
    </div>`;
  }

  private inset() {
    return html`<figure class="shot">
      <div class="tabs">${tabs(["Insert", "Page Layout", "Formulas", "Data", "Review", "View", "Developer"], "Insert")}</div>
      <div class="ribbon">
        ${group("Illustrations", "illus", html`
          ${big("picture", ["Picture"], "", false)}${big("clip", ["Clip", "Art"], "", false)}${big("shapes", ["Shapes"])}
          ${big("smart", ["SmartArt"], "", false)}${big("shot", ["Screenshot"], "", false)}`)}
        <div class="charts">
          ${big("chColumn", ["Column"], "on")}${big("chLine", ["Line"])}${big("chPie", ["Pie"])}${big("chBar", ["Bar"])}
          ${big("chArea", ["Area"])}${big("chScatter", ["Scatter"])}${big("chOther", ["Other", "Charts"])}
        </div>
      </div>
      <div class="formula"><span class="name"><i class="grow"></i>${caret}</span><span class="fx"><i></i><em>fx</em></span><span class="entry"></span></div>
      ${sheet(["B", "C", "D", "E", "F", "G", "H", "I"], 7, false, "mini")}
      <div class="menu">
        <h2>2-D Column</h2>
        <div class="tiles">
          <button class="hot" aria-label="Clustered">${ICONS.tile}</button><button aria-label="Stacked">${ICONS.tileStack}</button>
          <button aria-label="100% stacked">${ICONS.tileFull}</button>
        </div>
        <h2>3-D Column</h2>
        <div class="tiles">${["tile", "tileStack", "tileFull", "tile"].map((n) => html`<button aria-label="3-D">${ICONS[n]}</button>`)}</div>
        <h2>Cylinder</h2>
        <div class="tiles">${["tile", "tileStack", "tileFull", "tile"].map((n) => html`<button aria-label="Cylinder">${ICONS[n]}</button>`)}</div>
      </div>
      <div class="tip">
        <b>Clustered Column</b>
        <p>Compare values across categories<br />by using vertical rectangles.</p>
        <p>Use it when the order of categories<br />is not important or for displaying<br />item counts such as a histogram.</p>
      </div>
    </figure>`;
  }

  private notes() {
    const marks = [
      { x: 220, y: 127, tx: 251, ty: 74, head: "256,64 242,74 256,82", n: 1 },
      { x: 305, y: 138, tx: 347, ty: 97, head: "357,87 341,92 353,101", n: 2 },
      { x: 336, y: 148, tx: 357, ty: 134, head: "366,129 352,129 358,140", n: 3 },
    ];
    return html`<svg class="notes" aria-hidden="true">
      ${marks.map(
        (m) => svg`<g>
          <line x1=${m.x} y1=${m.y} x2=${m.tx} y2=${m.ty} stroke-width="5"/>
          <polygon points=${m.head}/>
          <circle cx=${m.x} cy=${m.y} r="8" fill="#fff" stroke-width="3"/>
          <text x=${m.x} y=${m.y + 4}>${m.n}</text>
        </g>`,
      )}
    </svg>`;
  }

  render() {
    return html`
      <main class="window">
        <header class="title">
          <div class="qat">
            ${ICONS.excel}${sep}
            <button aria-label="Save">${ICONS.save}</button><button aria-label="Undo">${ICONS.undo}${caret}</button>
            <button aria-label="Redo">${ICONS.redo}${caret}</button><button aria-label="Copy">${ICONS.pages}${caret}</button>
            <button aria-label="Document">${ICONS.doc}</button>
            <label class="search"><input aria-label="Quick style" />${caret}</label>
            ${["sheetGray", "lock", "form", "form", "pen"].map((n) => html`<button aria-label="Command">${ICONS[n]}</button>`)}
            ${sep}${caret}
          </div>
          <h1>Book3 - Microsoft Excel</h1>
          <div class="controls">
            <button aria-label="Minimize">${ICONS.min}</button><button aria-label="Maximize">${ICONS.max}</button>
            <button aria-label="Close">${ICONS.close}</button>
          </div>
        </header>
        <nav class="tabs">
          <button class="tab file">File</button>
          ${tabs(["Home", "Insert", "Page Layout", "Formulas", "Data", "Review", "View", "Developer"], "Home")}
          <div class="controls">
            ${["up", "help", "min", "restore", "close"].map((n) => html`<button aria-label=${n}>${ICONS[n]}</button>`)}
          </div>
        </nav>
        ${this.ribbon()}
        <div class="formula">
          <label class="name"><input aria-label="Name box" value="S34" />${caret}</label>
          <span class="fx"><i></i><em>fx</em></span>
          <input class="entry" aria-label="Formula" />
          <button class="expand" aria-label="Expand">${caret}</button>
        </div>
        <div class="work">
          ${sheet("ABCDEFGHIJKLMNOPQRS".split(""), 35, true, "main", "S34")}
          <div class="vscroll"><i class="caret up"></i><i class="vthumb"></i>${caret}</div>
          ${this.inset()}${this.notes()}
        </div>
        <div class="bottom">
          <div class="nav"><i class="tri l home"></i><i class="tri l"></i><i class="tri r"></i><i class="tri r end"></i></div>
          <button class="stab active">Sheet1${ICONS.slant}</button><button class="stab">Sheet2${ICONS.slant}</button>
          <button class="stab">Sheet3${ICONS.slant}</button>
          <button class="stab" aria-label="New sheet">${ICONS.newSheet}${ICONS.slant}</button>
          <i class="grow"></i><i class="split"></i>
          <div class="hscroll"><i class="tri l"></i><span class="hthumb"><i></i></span><i class="tri r"></i></div><i class="split last"></i>
        </div>
        <footer class="status">
          <span>Ready</span>${sep}${ICONS.record}${sep}<i class="grow"></i>
          <div class="views">${tool("viewNormal", "Normal", "on")}${tool("viewLayout", "Page layout")}${tool("viewBreak", "Page breaks")}</div>
          <span>100%</span>
          <button class="round" aria-label="Zoom out">−</button>
          <input class="zoom" type="range" aria-label="Zoom" value="50" />
          <button class="round" aria-label="Zoom in">+</button><i class="pad"></i>
        </footer>
      </main>
      <nav class="taskbar">
        <button class="start">${ICONS.flag}start</button>
        <div class="quick">
          ${["utorrent", "ie", "thunder", "fox", "folder"].map((n) => html`<button aria-label=${n}>${ICONS[n]}</button>`)}
          <i class="grow"></i><span>»</span>
        </div>
        <button class="task">${ICONS.chrome}Aula.bg - Question - ....</button>
        <button class="task">${ICONS.fox}Начална страница н...</button>
        <button class="task active">${ICONS.excel}Microsoft Excel - Book3</button>
        <button class="task">${ICONS.paint}untitled - Paint</button>
        <i class="grow"></i>
        <div class="lang"><span>EN</span>${ICONS.trayHelp}${ICONS.trayDots}</div>
        <div class="tray">${ICONS.trayBack}${ICONS.trayNet}${ICONS.trayAv}<time>19:23</time></div>
      </nav>
    `;
  }
}
